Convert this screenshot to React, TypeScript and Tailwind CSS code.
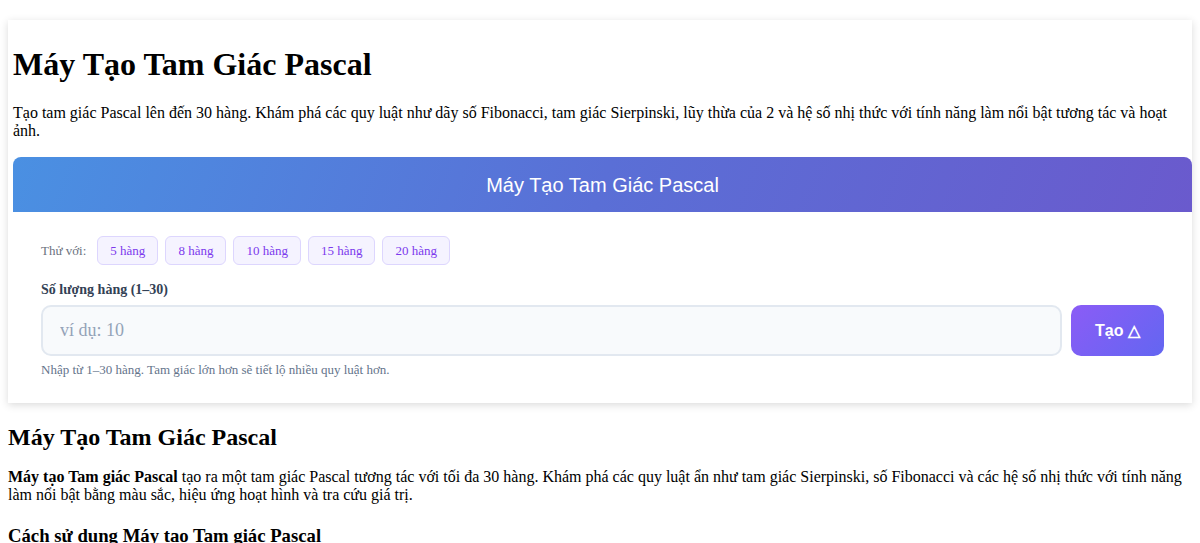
import React from 'react';

const presets = [5, 8, 10, 15, 20];

const serif = "font-['Liberation_Serif','Times_New_Roman',serif]";

export default function App() {
  return (
    <div className={`${serif} text-black bg-white px-2 pb-10`}>
      {/* Tool card */}
      <div className="mt-5 pl-[5px] bg-white shadow-[0_2px_8px_rgba(0,0,0,0.15)]">
        <h1 className="text-[32px] font-bold pt-[26px] mb-[21px] leading-[37px]">Máy Tạo Tam Giác Pascal</h1>
        <p className="text-base leading-[18px] mb-[17px]">
          Tạo tam giác Pascal lên đến 30 hàng. Khám phá các quy luật như dãy số Fibonacci, tam giác Sierpinski, lũy thừa của 2 và hệ số nhị thức với tính năng làm nổi bật tương tác và hoạt ảnh.
        </p>

        <div className="w-full">
          <div className="h-[55px] rounded-t-lg bg-[linear-gradient(110deg,#4a90e2_0%,#5a6fd6_50%,#6a5acd_100%)] flex items-center justify-center">
            <span className="font-['Liberation_Sans',Arial,sans-serif] text-white text-[20px]">Máy Tạo Tam Giác Pascal</span>
          </div>

          <div className="px-7 pt-6 pb-[23px]">
            <div className="flex items-center gap-[7px]">
              <span className="text-[13px] text-[#6b7280] mr-[4px]">Thử với:</span>
              {presets.map(n => (
                <button
                  key={n}
                  className="h-[29px] px-3 rounded-md border border-[#ddd6fe] bg-[#f5f3ff] text-[13px] text-[#7c3aed]"
                >
                  {n} hàng
                </button>
              ))}
            </div>

            <label className="block mt-[15px] mb-[5px] text-sm font-bold text-[#334155]">Số lượng hàng (1–30)</label>
            <div className="flex gap-[9px]">
              <input
                type="text"
                placeholder="ví dụ: 10"
                className={`${serif} flex-1 h-[51px] px-[17px] text-[18px] rounded-[10px] border-2 border-[#e2e8f0] bg-[#f8fafc] placeholder:text-[#94a3b8] outline-none`}
              />
              <button className="w-[93px] h-[51px] rounded-[10px] bg-[linear-gradient(135deg,#8b5cf6,#6366f1)] text-white font-bold text-base font-['Liberation_Sans',Arial,sans-serif]">
                Tạo △
              </button>
            </div>
            <p className="mt-1 text-[13px] text-[#64748b]">Nhập từ 1–30 hàng. Tam giác lớn hơn sẽ tiết lộ nhiều quy luật hơn.</p>
          </div>
        </div>
      </div>

      {/* Article */}
      <h2 className="text-[24px] font-bold mt-5 mb-[17px] leading-[28px]">Máy Tạo Tam Giác Pascal</h2>
      <p className="text-base leading-[18px]">
        <strong>Máy tạo Tam giác Pascal</strong> tạo ra một tam giác Pascal tương tác với tối đa 30 hàng. Khám phá các quy luật ẩn như tam giác Sierpinski, số Fibonacci và các hệ số nhị thức với tính năng làm nổi bật bằng màu sắc, hiệu ứng hoạt hình và tra cứu giá trị.
      </p>
      <h3 className="text-[18.72px] font-bold mt-[21px] leading-[22px]">Cách sử dụng Máy tạo Tam giác Pascal</h3>
    </div>
  );
}
